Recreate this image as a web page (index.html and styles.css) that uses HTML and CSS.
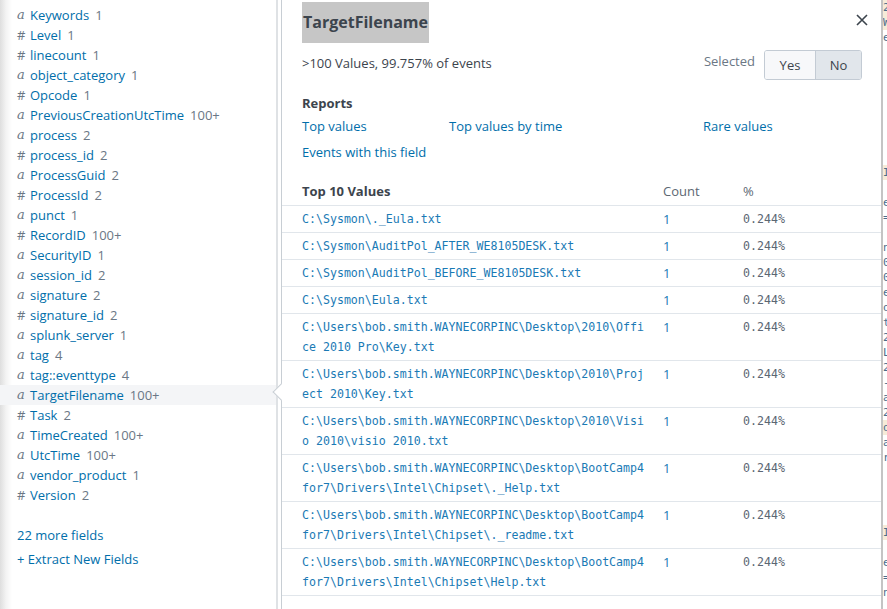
FILE: index.html
```html
<!DOCTYPE html>
<html>
<head>
<meta charset="utf-8">
<link rel="stylesheet" href="styles.css">
</head>
<body>
<div class="page">
  <aside class="sidebar">
    <ul class="fields">
      <li><span class="ty a">a</span><a class="fname">Keywords</a><span class="cnt">1</span></li>
      <li><span class="ty n">#</span><a class="fname">Level</a><span class="cnt">1</span></li>
      <li><span class="ty n">#</span><a class="fname">linecount</a><span class="cnt">1</span></li>
      <li><span class="ty a">a</span><a class="fname">object_category</a><span class="cnt">1</span></li>
      <li><span class="ty n">#</span><a class="fname">Opcode</a><span class="cnt">1</span></li>
      <li><span class="ty a">a</span><a class="fname">PreviousCreationUtcTime</a><span class="cnt">100+</span></li>
      <li><span class="ty a">a</span><a class="fname">process</a><span class="cnt">2</span></li>
      <li><span class="ty n">#</span><a class="fname">process_id</a><span class="cnt">2</span></li>
      <li><span class="ty a">a</span><a class="fname">ProcessGuid</a><span class="cnt">2</span></li>
      <li><span class="ty n">#</span><a class="fname">ProcessId</a><span class="cnt">2</span></li>
      <li><span class="ty a">a</span><a class="fname">punct</a><span class="cnt">1</span></li>
      <li><span class="ty n">#</span><a class="fname">RecordID</a><span class="cnt">100+</span></li>
      <li><span class="ty a">a</span><a class="fname">SecurityID</a><span class="cnt">1</span></li>
      <li><span class="ty a">a</span><a class="fname">session_id</a><span class="cnt">2</span></li>
      <li><span class="ty a">a</span><a class="fname">signature</a><span class="cnt">2</span></li>
      <li><span class="ty n">#</span><a class="fname">signature_id</a><span class="cnt">2</span></li>
      <li><span class="ty a">a</span><a class="fname">splunk_server</a><span class="cnt">1</span></li>
      <li><span class="ty a">a</span><a class="fname">tag</a><span class="cnt">4</span></li>
      <li><span class="ty a">a</span><a class="fname">tag::eventtype</a><span class="cnt">4</span></li>
      <li class="active"><span class="ty a">a</span><a class="fname">TargetFilename</a><span class="cnt">100+</span></li>
      <li><span class="ty n">#</span><a class="fname">Task</a><span class="cnt">2</span></li>
      <li><span class="ty a">a</span><a class="fname">TimeCreated</a><span class="cnt">100+</span></li>
      <li><span class="ty a">a</span><a class="fname">UtcTime</a><span class="cnt">100+</span></li>
      <li><span class="ty a">a</span><a class="fname">vendor_product</a><span class="cnt">1</span></li>
      <li><span class="ty n">#</span><a class="fname">Version</a><span class="cnt">2</span></li>
    </ul>
    <a class="more">22 more fields</a>
    <a class="extract">+ Extract New Fields</a>
  </aside>

  <section class="popup">
    <span class="arrow"></span>
    <div class="head">
      <h2 class="title"><span class="hl">TargetFilename</span></h2>
      <svg class="close" width="12" height="12" viewBox="0 0 12 12"><path d="M1 1 L11 11 M11 1 L1 11" stroke="#3c444d" stroke-width="1.6" fill="none"/></svg>
    </div>
    <div class="summary">
      <span class="stats">&gt;100 Values, 99.757% of events</span>
      <div class="selected">
        <span class="sel-label">Selected</span>
        <div class="btn-group"><button class="btn">Yes</button><button class="btn on">No</button></div>
      </div>
    </div>
    <h3 class="reports">Reports</h3>
    <div class="links">
      <a>Top values</a><a>Top values by time</a><a>Rare values</a>
      <a>Events with this field</a>
    </div>
    <table class="vals">
      <thead><tr><th class="c-val">Top 10 Values</th><th class="c-cnt">Count</th><th class="c-pct">%</th></tr></thead>
      <tbody>
        <tr><td class="c-val">C:\Sysmon\._Eula.txt</td><td class="c-cnt">1</td><td class="c-pct">0.244%</td></tr>
        <tr><td class="c-val">C:\Sysmon\AuditPol_AFTER_WE8105DESK.txt</td><td class="c-cnt">1</td><td class="c-pct">0.244%</td></tr>
        <tr><td class="c-val">C:\Sysmon\AuditPol_BEFORE_WE8105DESK.txt</td><td class="c-cnt">1</td><td class="c-pct">0.244%</td></tr>
        <tr><td class="c-val">C:\Sysmon\Eula.txt</td><td class="c-cnt">1</td><td class="c-pct">0.244%</td></tr>
        <tr><td class="c-val">C:\Users\bob.smith.WAYNECORPINC\Desktop\2010\Office 2010 Pro\Key.txt</td><td class="c-cnt">1</td><td class="c-pct">0.244%</td></tr>
        <tr><td class="c-val">C:\Users\bob.smith.WAYNECORPINC\Desktop\2010\Project 2010\Key.txt</td><td class="c-cnt">1</td><td class="c-pct">0.244%</td></tr>
        <tr><td class="c-val">C:\Users\bob.smith.WAYNECORPINC\Desktop\2010\Visio 2010\visio 2010.txt</td><td class="c-cnt">1</td><td class="c-pct">0.244%</td></tr>
        <tr><td class="c-val">C:\Users\bob.smith.WAYNECORPINC\Desktop\BootCamp4for7\Drivers\Intel\Chipset\._Help.txt</td><td class="c-cnt">1</td><td class="c-pct">0.244%</td></tr>
        <tr><td class="c-val">C:\Users\bob.smith.WAYNECORPINC\Desktop\BootCamp4for7\Drivers\Intel\Chipset\._readme.txt</td><td class="c-cnt">1</td><td class="c-pct">0.244%</td></tr>
        <tr><td class="c-val">C:\Users\bob.smith.WAYNECORPINC\Desktop\BootCamp4for7\Drivers\Intel\Chipset\Help.txt</td><td class="c-cnt">1</td><td class="c-pct">0.244%</td></tr>
      </tbody>
    </table>
  </section>

  <div class="edge">
    <span class="hi">2</span><span class="hi">W</span><span>e</span><span></span><span></span><span></span><span></span><span></span><span></span><span></span><span></span><span class="hi">I</span><span></span><span>e</span><span>=</span><span></span><span>n</span><span>0</span><span>0</span><span>e</span><span>o</span><span>t</span><span>2</span><span>L</span><span>2</span><span>-</span><span>a</span><span>2</span><span class="hi">o</span><span>a</span><span>r</span><span></span><span></span><span></span><span></span><span class="hi">I</span><span></span><span>e</span><span>=</span><span>n</span>
  </div>
</div>
</body>
</html>
```

FILE: styles.css
```css
* { box-sizing: border-box; }
html, body { margin: 0; padding: 0; }
body {
  width: 887px;
  height: 609px;
  overflow: hidden;
  background: #fff;
  font-family: "Open Sans", "Liberation Sans", sans-serif;
  font-size: 13px;
  color: #3c444d;
}
a { color: #006eaa; text-decoration: none; cursor: pointer; }

.page {
  display: flex;
  height: 609px;
}

/* Sidebar */
.sidebar {
  width: 278px;
  flex: none;
  border-right: 2px solid #dfe2e5;
  background: linear-gradient(to right, #dedede 0px, #f3f3f3 6px, #ffffff 12px);
  padding-top: 5px;
  display: flex;
  flex-direction: column;
}
.fields {
  list-style: none;
  margin: 0;
  padding: 0;
}
.fields li {
  height: 20px;
  line-height: 20px;
  padding-left: 17px;
  white-space: nowrap;
  display: flex;
  align-items: center;
}
.fields li.active { background: #f4f5f7; }
.ty {
  width: 13px;
  flex: none;
  color: #6b7785;
}
.ty.a {
  font-family: "DejaVu Serif", "Liberation Serif", serif;
  font-style: italic;
  font-size: 13px;
}
.ty.n { font-size: 13px; }
.fname { color: #006eaa; }
.cnt { color: #6b7785; margin-left: 6px; }

.more {
  margin-top: 20px;
  padding-left: 17px;
  line-height: 20px;
}
.extract {
  margin-top: 4px;
  padding-left: 17px;
  line-height: 20px;
}

/* Popup */
.popup {
  position: relative;
  width: 600px;
  flex: none;
  margin-left: 3px;
  border-left: 1px solid #c8ced4;
  padding-top: 2px;
}
.arrow {
  position: absolute;
  left: -7px;
  top: 386px;
  width: 12px;
  height: 12px;
  background: #fff;
  border-left: 1px solid #c8ced4;
  border-bottom: 1px solid #c8ced4;
  transform: rotate(45deg);
}
.head {
  display: flex;
  justify-content: space-between;
  align-items: flex-start;
  padding-left: 20px;
  padding-right: 13px;
}
.title {
  margin: 0;
  font-size: 16px;
  font-weight: 700;
  line-height: 41px;
  color: #3c444d;
}
.hl { display: inline-block; background: #c6c6c6; padding: 0 1px; }
.close { margin-top: 12px; }

.summary {
  display: flex;
  justify-content: space-between;
  align-items: flex-start;
  padding: 7px 19px 0 20px;
}
.stats { line-height: 30px; margin-top: -2px; }
.selected { display: flex; align-items: flex-start; }
.sel-label { color: #6b7785; line-height: 20px; margin-right: 9px; margin-top: 1px; }
.btn-group {
  display: flex;
  border: 1px solid #c3cbd4;
  border-radius: 3px;
  overflow: hidden;
}
.btn {
  font-family: inherit;
  font-size: 13px;
  color: #3c444d;
  border: none;
  height: 28px;
  padding: 0;
  background: #f7f8fa;
  width: 50px;
}
.btn.on {
  width: 46px;
  background: #e1e6eb;
  border-left: 1px solid #c3cbd4;
}

.reports {
  margin: 13px 0 0 20px;
  font-size: 13px;
  font-weight: 700;
  line-height: 20px;
}
.links {
  display: grid;
  grid-template-columns: 147px 254px auto;
  padding-left: 20px;
  row-gap: 6px;
  line-height: 20px;
  margin-top: 3px;
}

.vals {
  width: 100%;
  border-collapse: collapse;
  margin-top: 19px;
  table-layout: fixed;
}
.vals th {
  text-align: left;
  font-size: 13px;
  line-height: 20px;
  padding: 0 0 4px 0;
  border-bottom: 1px solid #e1e6eb;
  font-weight: 400;
  color: #5c6773;
}
.vals th.c-val { font-weight: 700; color: #3c444d; }
.vals td {
  vertical-align: top;
  padding: 3px 0 3px 0;
  line-height: 20px;
  border-bottom: 1px solid #e1e6eb;
}
.c-val { width: 381px; padding-left: 20px !important; padding-right: 15px !important; }
.c-cnt { width: 80px; }
.vals td.c-val {
  font-family: "DejaVu Sans Mono", "Liberation Mono", monospace;
  font-size: 11.6px;
  color: #1a7ab5;
  word-break: break-all;
}
.vals td.c-cnt { color: #1a7ab5; font-size: 13px; }
.vals td.c-pct {
  font-family: "DejaVu Sans Mono", "Liberation Mono", monospace;
  font-size: 11.6px;
  color: #5c6773;
}

/* right strip */
.edge {
  width: 6px;
  flex: none;
  border-left: 2px solid #c4c4c4;
  overflow: hidden;
  display: flex;
  flex-direction: column;
  font-family: "DejaVu Sans Mono", monospace;
  font-size: 11px;
  line-height: 15px;
  color: #4a6d8c;
}
.edge span { height: 15px; display: block; }
.edge span.hi { background: #f6ebd8; }
```
